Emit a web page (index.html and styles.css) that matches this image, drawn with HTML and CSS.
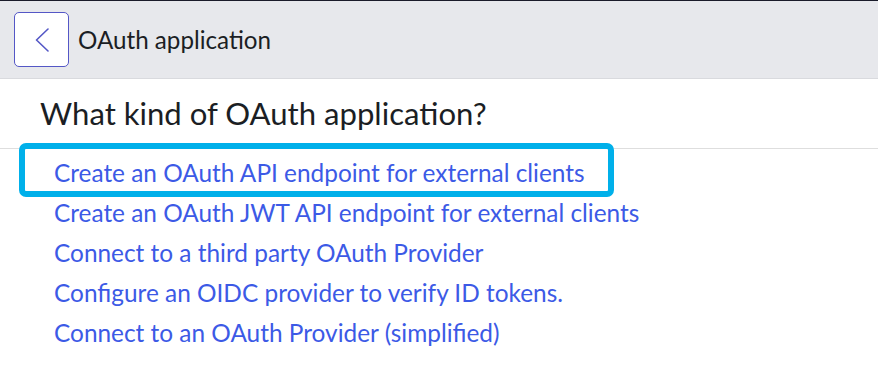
FILE: index.html
```html
<!DOCTYPE html>
<html>
<head>
<meta charset="utf-8">
<link rel="stylesheet" href="styles.css">
</head>
<body>
<header class="topbar">
  <button class="back" aria-label="Back">
    <svg width="14" height="24" viewBox="0 0 14 24"><polyline points="13,1 1.5,12 13,23" fill="none" stroke="#5457c6" stroke-width="1.6" stroke-linecap="round" stroke-linejoin="round"/></svg>
  </button>
  <span class="title">OAuth application</span>
</header>
<section class="question">
  <h1>What kind of OAuth application?</h1>
</section>
<ul class="options">
  <li><a class="opt focused" href="#">Create an OAuth API endpoint for external clients</a></li>
  <li><a class="opt" href="#">Create an OAuth JWT API endpoint for external clients</a></li>
  <li><a class="opt" href="#">Connect to a third party OAuth Provider</a></li>
  <li><a class="opt" href="#">Configure an OIDC provider to verify ID tokens.</a></li>
  <li><a class="opt" href="#">Connect to an OAuth Provider (simplified)</a></li>
</ul>
</body>
</html>
```
FILE: styles.css
```css
html, body {
  margin: 0;
  padding: 0;
  background: #ffffff;
  font-family: Lato, "Open Sans", sans-serif;
}
.topbar {
  display: flex;
  align-items: center;
  height: 77px;
  border-top: 1px solid #1a1b2a;
  border-bottom: 1px solid #d9dade;
  background: #e7e8ec;
  padding-left: 14px;
  gap: 9px;
  box-sizing: content-box;
}
.back {
  width: 55px;
  height: 55px;
  padding: 0;
  margin: 0;
  display: flex;
  align-items: center;
  justify-content: center;
  background: #ffffff;
  border: 1px solid #5457c6;
  border-radius: 5px;
}
.title {
  font-size: 24.2px;
  color: #1b1e24;
}
.question {
  border-bottom: 1px solid #dedede;
  height: 69px;
  padding-left: 40px;
  box-sizing: content-box;
}
.question h1 {
  margin: 0;
  padding-top: 15px;
  font-size: 31.1px;
  font-weight: 400;
  color: #1b1e24;
}
.options {
  list-style: none;
  margin: 0;
  padding: 4px 0 0 54px;
}
.options li {
  height: 40px;
  line-height: 40px;
}
.opt {
  font-size: 24.4px;
  color: #3c5ae6;
  text-decoration: none;
}
.opt.focused {
  position: relative;
}
.opt.focused::after {
  content: "";
  position: absolute;
  left: -35px;
  right: -29px;
  top: -15px;
  bottom: -10px;
  border: 6px solid #00b0ea;
  border-radius: 7px;
}
```
